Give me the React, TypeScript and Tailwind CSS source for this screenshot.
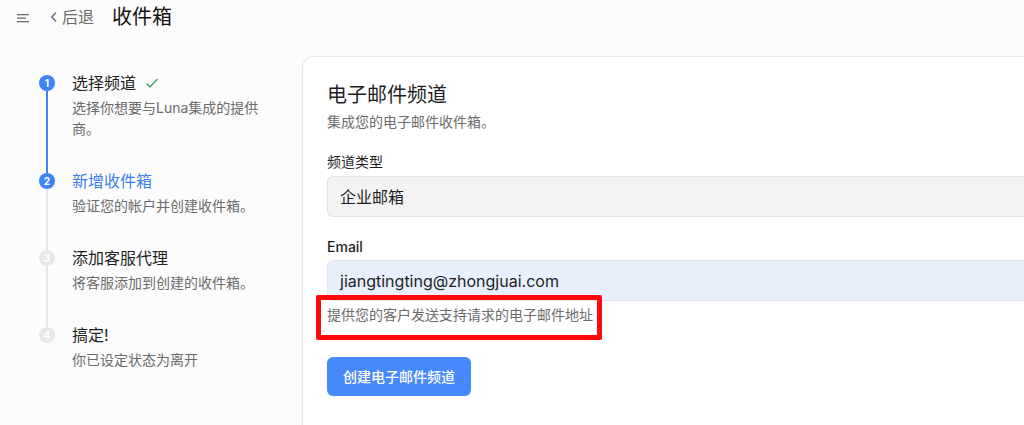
const steps = [
  { n: 1, title: "选择频道", desc: "选择你想要与Luna集成的提供商。", done: true, active: false },
  { n: 2, title: "新增收件箱", desc: "验证您的帐户并创建收件箱。", done: false, active: true },
  { n: 3, title: "添加客服代理", desc: "将客服添加到创建的收件箱。", done: false, active: false },
  { n: 4, title: "搞定!", desc: "你已设定状态为离开", done: false, active: false },
];

function StepList() {
  return (
    <div className="flex w-[302px] shrink-0 flex-col pl-[39px] pr-[40px] pt-[15px]">
      {steps.map((s, i) => {
        const reached = s.done || s.active;
        const inColor = i === 0 ? "bg-transparent" : steps[i - 1].done ? "bg-[#3d84f7]" : "bg-[#e5e5ea]";
        const outColor = s.done ? "bg-[#3d84f7]" : "bg-[#e5e5ea]";
        const last = i === steps.length - 1;
        return (
          <div key={s.n} className="flex gap-[17px]">
            <div className="flex w-4 shrink-0 flex-col items-center">
              <div className={`h-[4px] w-[2px] ${inColor}`} />
              <div
                className={`flex h-4 w-4 items-center justify-center rounded-full text-[10px] font-bold text-white ${
                  reached ? "bg-[#3d84f7]" : "bg-[#e8e8ec]"
                }`}
              >
                {s.n}
              </div>
              {!last && <div className={`w-[2px] flex-1 ${outColor}`} />}
            </div>
            <div className={`flex-1 ${last ? "" : "pb-[30px]"}`}>
              <div
                className={`flex items-center gap-[9px] text-[16px] leading-[24px] ${
                  s.active ? "text-[#3b7ff0]" : "text-[#1f1f1f]"
                }`}
              >
                {s.title}
                {s.done && (
                  <svg width="14" height="14" viewBox="0 0 14 14" fill="none" stroke="#3aa563" strokeWidth="1.3">
                    <path d="M1.5 7.5 L5 11 L12.5 3" />
                  </svg>
                )}
              </div>
              <div className="mt-[2px] text-[14px] leading-[21px] text-[#6b6b6b]">{s.desc}</div>
            </div>
          </div>
        );
      })}
    </div>
  );
}

export default function App() {
  return (
    <div className="h-[425px] w-[1024px] overflow-hidden bg-[#fcfcfc] font-['Inter','Noto_Sans_CJK_SC',sans-serif]">
      <header className="flex h-[34px] items-center pl-[17px]">
        <svg width="13" height="10" viewBox="0 0 13 10" className="mt-[2px]">
          <rect x="0" y="1" width="12" height="1.3" fill="#6e6e6e" />
          <rect x="0" y="4.5" width="9" height="1.3" fill="#6e6e6e" />
          <rect x="0" y="8" width="12" height="1.3" fill="#6e6e6e" />
        </svg>
        <button className="ml-[20px] flex items-center gap-[4px] text-[16px] text-[#6b6b6b]">
          <svg width="8" height="12" viewBox="0 0 8 12" fill="none" stroke="#6b6b6b" strokeWidth="1.4">
            <path d="M6 1.5 L1.8 6 L6 10.5" />
          </svg>
          后退
        </button>
        <h1 className="ml-[18px] text-[20px] text-[#111]">收件箱</h1>
      </header>
      <div className="mt-[22px] flex">
        <StepList />
        <main className="h-[400px] flex-1 rounded-tl-xl border-l border-t border-[#e8e8e8] bg-white pl-[24px] pt-[24px]">
          <h2 className="text-[20px] leading-[28px] text-[#1f1f1f]">电子邮件频道</h2>
          <p className="mt-[3px] text-[14px] leading-[20px] text-[#6b6b6b]">集成您的电子邮件收件箱。</p>

          <label className="mt-[20px] block text-[14px] leading-[20px] text-[#1f1f1f]">频道类型</label>
          <div className="mt-[4px] flex h-[41px] items-center rounded-l-md border border-r-0 border-[#e4e4e4] bg-[#f3f3f3] pl-[12px] text-[16px] text-[#1f1f1f]">
            企业邮箱
          </div>

          <label className="mt-[20px] block text-[14px] font-medium leading-[20px] text-[#1f1f1f]">Email</label>
          <div className="mt-[3px] flex h-[41px] items-center rounded-l-md border border-r-0 border-[#e4e4e4] bg-[#e8f0fe] pl-[12px] text-[16px] text-[#1f1f1f]">
            jiangtingting@zhongjuai.com
          </div>

          <div className="relative mt-[4px] w-fit text-[14px] leading-[20px] text-[#6b6b6b]">
            提供您的客户发送支持请求的电子邮件地址
            <span className="absolute left-[-11px] top-[-10px] h-[45px] w-[286px] rounded-[2px] border-[5px] border-[#ff0a0a]" />
          </div>

          <button className="mt-[32px] h-[39px] rounded-md bg-[#4589fd] px-[16px] text-[14px] font-medium text-white">
            创建电子邮件频道
          </button>
        </main>
      </div>
    </div>
  );
}
